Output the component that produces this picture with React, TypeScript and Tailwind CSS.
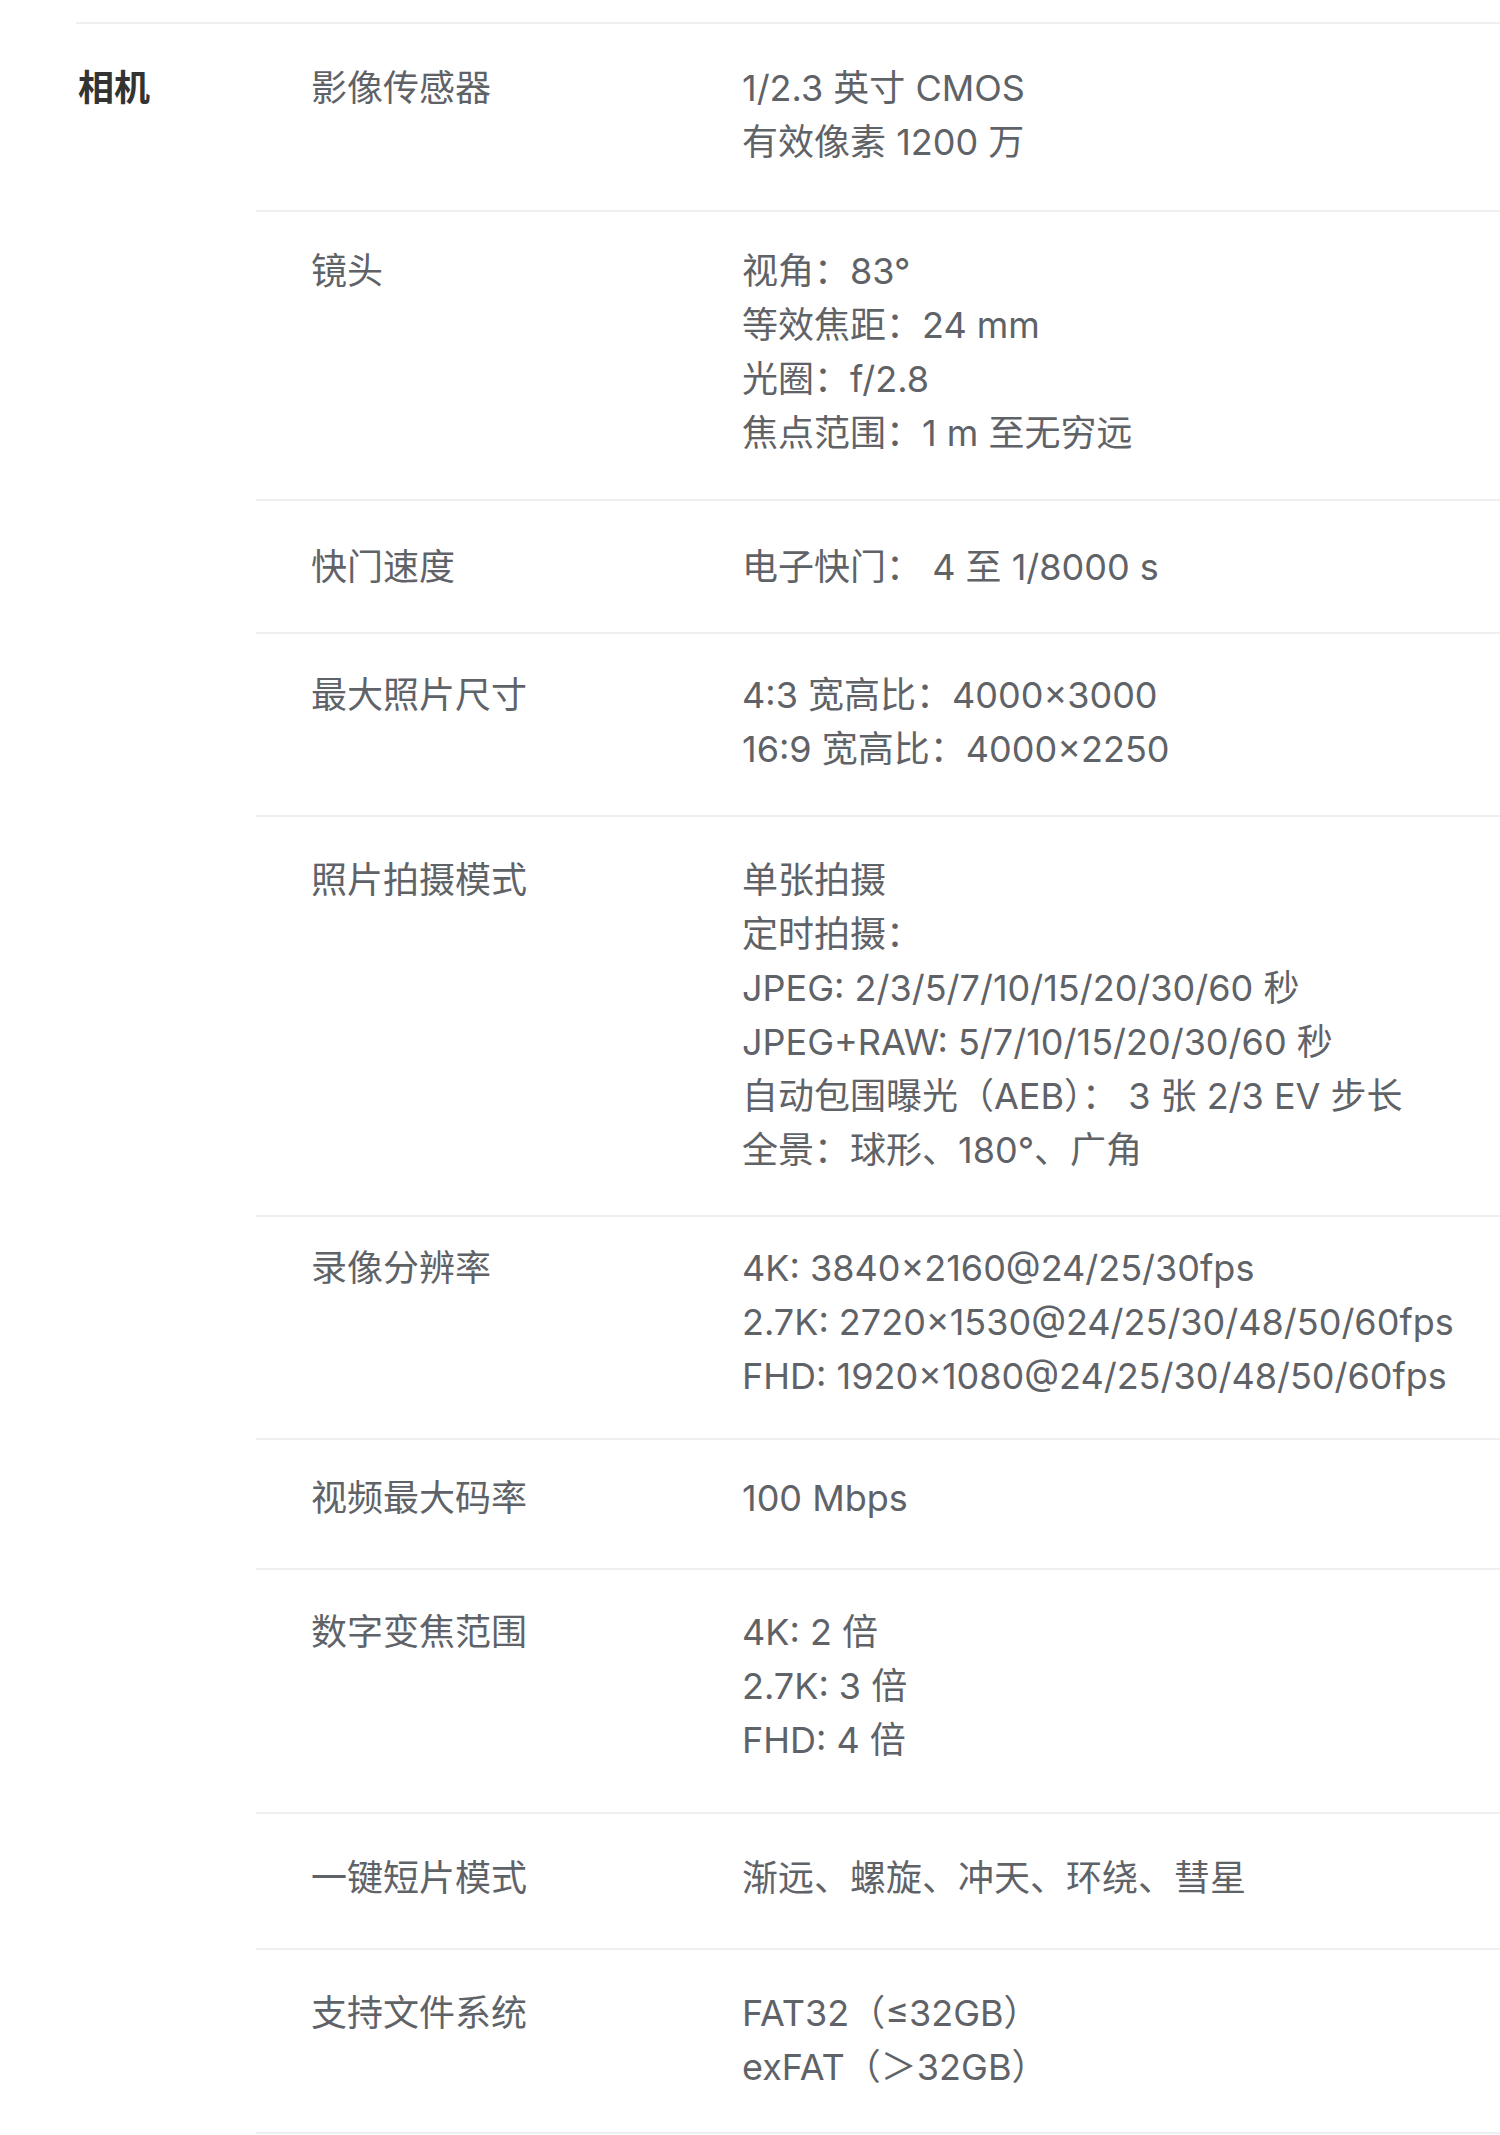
const rows = [
  { label: '影像传感器', pad: 'pt-[37px] pb-[41px]', values: ['1/2.3 英寸 CMOS', '有效像素 1200 万'] },
  { label: '镜头', pad: 'pt-[32px] pb-[39px]', values: ['视角：83°', '等效焦距：24 mm', '光圈：f/2.8', '焦点范围：1 m 至无穷远'] },
  { label: '快门速度', pad: 'pt-[39px] pb-[38px]', values: ['电子快门： 4 至 1/8000 s'] },
  { label: '最大照片尺寸', pad: 'pt-[34px] pb-[39px]', values: ['4:3 宽高比：4000×3000', '16:9 宽高比：4000×2250'] },
  {
    label: '照片拍摄模式',
    pad: 'pt-[36px] pb-[38px]',
    values: [
      '单张拍摄',
      '定时拍摄：',
      'JPEG: 2/3/5/7/10/15/20/30/60 秒',
      'JPEG+RAW: 5/7/10/15/20/30/60 秒',
      '自动包围曝光（AEB）： 3 张 2/3 EV 步长',
      '全景：球形、180°、广角',
    ],
  },
  {
    label: '录像分辨率',
    pad: 'pt-[24px] pb-[35px]',
    values: ['4K: 3840×2160@24/25/30fps', '2.7K: 2720×1530@24/25/30/48/50/60fps', 'FHD: 1920×1080@24/25/30/48/50/60fps'],
  },
  { label: '视频最大码率', pad: 'pt-[31px] pb-[43px]', values: ['100 Mbps'] },
  { label: '数字变焦范围', pad: 'pt-[35px] pb-[45px]', values: ['4K: 2 倍', '2.7K: 3 倍', 'FHD: 4 倍'] },
  { label: '一键短片模式', pad: 'pt-[37px] pb-[43px]', values: ['渐远、螺旋、冲天、环绕、彗星'] },
  { label: '支持文件系统', pad: 'pt-[36px] pb-[38px]', values: ['FAT32（≤32GB）', 'exFAT（＞32GB）'] },
];

export default function App() {
  return (
    <div className="min-h-screen bg-white pt-[22px] font-['Inter','Noto_Sans_CJK_SC',sans-serif] text-[36px] leading-[54px]">
      <div className="ml-[76px] flex border-t-2 border-[#efeff1]">
        <div className="w-[180px] shrink-0 pt-[37px] pl-[2px] font-bold text-[#333333]">相机</div>
        <div className="flex-1">
          {rows.map((row) => (
            <div key={row.label} className={`flex border-b-2 border-[#efeff1] pl-[55px] ${row.pad}`}>
              <div className="w-[431px] shrink-0 text-[#5f6368]">{row.label}</div>
              <div className="flex flex-col text-[#5f6368] whitespace-nowrap">
                {row.values.map((v) => (
                  <span key={v}>{v}</span>
                ))}
              </div>
            </div>
          ))}
        </div>
      </div>
    </div>
  );
}
